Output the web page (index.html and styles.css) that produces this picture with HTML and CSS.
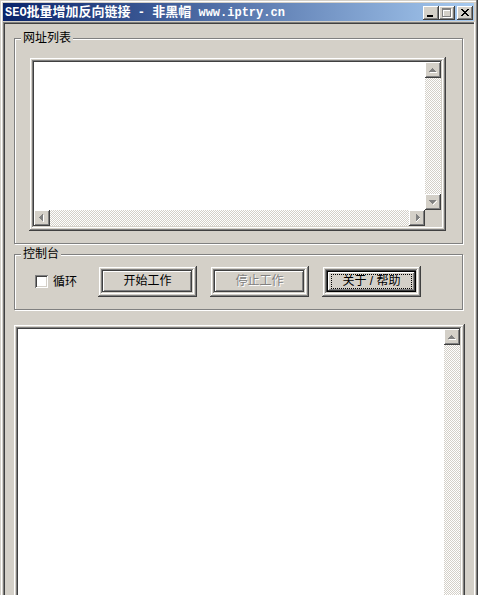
FILE: index.html
```html
<!DOCTYPE html>
<html lang="zh-CN">
<head>
<meta charset="utf-8">
<title>SEO批量增加反向链接 - 非黑帽 www.iptry.cn</title>
<link rel="stylesheet" href="styles.css">
</head>
<body>
<div class="window">
  <header class="titlebar">
    <h1 class="title">SEO<span class="han">批量增加反向链接</span> - <span class="han">非黑帽</span> www.iptry.cn</h1>
    <div class="captions">
      <button class="caption" type="button" aria-label="最小化">
        <svg width="12" height="10" shape-rendering="crispEdges"><path d="M2 7h6v2H2z" fill="#000"/></svg>
      </button>
      <button class="caption" type="button" aria-label="最大化" disabled>
        <svg width="12" height="10" shape-rendering="crispEdges"><path d="M2 1h9v9H2zM3 3v6h7V3z" fill="#fff" fill-rule="evenodd"/><path d="M1 0h9v9H1zM2 2v6h7V2z" fill="#808080" fill-rule="evenodd"/></svg>
      </button>
      <button class="caption caption-close" type="button" aria-label="关闭">
        <svg width="12" height="10" shape-rendering="crispEdges"><path d="M2 1h2v1h1v1h2V2h1V1h2v1H9v1H8v1H7v1h1v1h1v1h1v1H8V7H7V6H5v1H4v1H2V7h1V6h1V5h1V4H4V3H3V2H2z" fill="#000"/></svg>
      </button>
    </div>
  </header>
  <main class="client">
    <fieldset class="group">
      <legend>网址列表</legend>
      <div class="edge url-box">
        <textarea class="field" aria-label="网址列表"></textarea>
        <div class="track track-v">
          <button class="arrow" type="button" aria-label="向上滚动"><svg width="12" height="12" shape-rendering="crispEdges"><path d="M3 8h7v1H3z" fill="#fff"/><path d="M5 4h1v1h1v1h1v1h1v1H2V7h1V6h1V5h1z" fill="#808080"/></svg></button>
          <button class="arrow" type="button" aria-label="向下滚动"><svg width="12" height="12" shape-rendering="crispEdges"><path d="M9 5h1v1H9v1H8v1H7v1H6V8h1V7h1V6h1z" fill="#fff"/><path d="M2 4h7v1H8v1H7v1H6v1H5V7H4V6H3V5H2z" fill="#808080"/></svg></button>
        </div>
        <div class="track track-h">
          <button class="arrow" type="button" aria-label="向左滚动"><svg width="12" height="12" shape-rendering="crispEdges"><path d="M7 3h1v7H7z" fill="#fff"/><path d="M6 2h1v7H6V8H5V7H4V6H3V5h1V4h1V3h1z" fill="#808080"/></svg></button>
          <button class="arrow" type="button" aria-label="向右滚动"><svg width="12" height="12" shape-rendering="crispEdges"><path d="M8 6h1v1H8v1H7v1H6v1H5V9h1V8h1V7h1z" fill="#fff"/><path d="M5 2v7h1V8h1V7h1V6h1V5H8V4H7V3H6V2z" fill="#808080"/></svg></button>
        </div>
      </div>
    </fieldset>
    <fieldset class="group">
      <legend>控制台</legend>
      <div class="controls">
        <label class="check"><input type="checkbox">循环</label>
        <div class="buttons">
          <button class="edge command" type="button"><span class="face">开始工作</span></button>
          <button class="edge command" type="button" disabled><span class="face">停止工作</span></button>
          <button class="edge command command-default" type="button"><span class="face"><span class="focus">关于 / 帮助</span></span></button>
        </div>
      </div>
    </fieldset>
    <div class="edge log-box">
      <textarea class="field" aria-label="日志"></textarea>
      <div class="track track-v">
        <button class="arrow" type="button" aria-label="向上滚动"><svg width="12" height="12" shape-rendering="crispEdges"><path d="M3 8h7v1H3z" fill="#fff"/><path d="M5 4h1v1h1v1h1v1h1v1H2V7h1V6h1V5h1z" fill="#808080"/></svg></button>
      </div>
    </div>
  </main>
</div>
</body>
</html>
```

FILE: styles.css
```css
:root {
  --face: #d4d0c8;
  --light: #ffffff;
  --shadow: #808080;
  --dark: #404040;
  --raised:
    inset -1px -1px 0 var(--dark),
    inset 1px 1px 0 var(--light),
    inset -2px -2px 0 var(--shadow);
}

* {
  box-sizing: border-box;
}

body {
  margin: 0;
  height: 100vh;
  overflow: hidden;
  background: var(--face);
  color: #000;
  font: 12px/14px "Liberation Sans", "Noto Sans CJK SC", sans-serif;
}

button,
textarea {
  margin: 0;
  padding: 0;
  border: 0;
  border-radius: 0;
  font: inherit;
  color: inherit;
}

svg {
  display: block;
}

/* Window frame; the bottom edge runs past the viewport */
.window {
  display: flex;
  flex-direction: column;
  height: 100vh;
  padding: 3px 3px 0;
  box-shadow:
    inset -1px 0 0 var(--dark),
    inset -2px 0 0 var(--shadow),
    inset 1px 1px 0 var(--face),
    inset 2px 2px 0 var(--light);
}

.titlebar {
  display: flex;
  align-items: center;
  justify-content: space-between;
  height: 18px;
  margin: 0 1px 1px 0;
  padding: 1px 1px 0 2px;
  background: linear-gradient(to right, #0a246a, #a6caf0);
}

.title {
  margin: 0;
  color: #fff;
  font: bold 12px/16px "Liberation Mono", "Noto Sans CJK SC", monospace;
  white-space: nowrap;
}

.title .han {
  font-size: 13px;
}

.captions {
  display: flex;
}

.caption {
  width: 16px;
  height: 14px;
  padding: 2px;
  background: var(--face);
  box-shadow: var(--raised);
}

.caption-close {
  margin-left: 2px;
}

.client {
  flex: 1;
  display: flex;
  flex-direction: column;
  min-height: 0;
  padding: 10px 12px 0 11px;
  box-shadow:
    inset -1px 0 0 var(--light),
    inset 1px 1px 0 var(--shadow),
    inset 2px 2px 0 var(--dark);
}

/* Etched group boxes */
.group {
  min-width: 0;
  margin: 0 0 4px;
  padding: 0 6px 12px;
  border: 1px solid var(--shadow);
  box-shadow: 1px 1px 0 var(--light), inset 1px 1px 0 var(--light);
}

.group legend {
  padding: 0 2px;
  background: var(--face);
  line-height: 13px;
}

/* Raised rim, one-pixel gap, sunken rim */
.edge {
  padding: 5px;
  background: var(--face);
  box-shadow:
    inset -1px -1px 0 var(--dark),
    inset 1px 1px 0 var(--face),
    inset -2px -2px 0 var(--shadow),
    inset 2px 2px 0 var(--light),
    inset 0 0 0 3px var(--face),
    inset -4px -4px 0 var(--light),
    inset 4px 4px 0 var(--shadow),
    inset -5px -5px 0 var(--face),
    inset 5px 5px 0 var(--dark);
}

.url-box,
.log-box {
  display: grid;
  grid-template-columns: 1fr 16px;
}

.url-box {
  grid-template-rows: 1fr 16px;
  height: 174px;
  margin: 12px 10px 0 8px;
}

.field {
  width: 100%;
  height: 100%;
  background: #fff;
  outline: 0;
  resize: none;
  overflow: hidden;
}

.track {
  display: flex;
  justify-content: space-between;
  background: repeating-conic-gradient(var(--face) 0 25%, #fff 0 50%) 0 0 / 2px 2px;
}

.track-v {
  flex-direction: column;
}

.arrow {
  width: 16px;
  height: 16px;
  padding: 2px;
  background: var(--face);
  box-shadow: var(--raised);
}

.controls {
  display: flex;
  align-items: center;
  gap: 21px;
  margin: 5px 0 0 14px;
}

.check {
  display: flex;
  align-items: center;
  gap: 5px;
  white-space: nowrap;
}

.check input {
  appearance: none;
  width: 13px;
  height: 13px;
  margin: 0;
  background: #fff;
  box-shadow:
    inset 1px 1px 0 var(--shadow),
    inset -1px -1px 0 var(--light),
    inset 2px 2px 0 var(--dark),
    inset -2px -2px 0 var(--face);
}

.check input:checked {
  background: #000;
}

.buttons {
  display: flex;
  gap: 13px;
}

.command {
  width: 99px;
  height: 31px;
}

.face {
  display: block;
  height: 21px;
  padding: 3px;
  line-height: 15px;
  box-shadow: var(--raised);
}

.command:disabled {
  color: var(--shadow);
  text-shadow: 1px 1px 0 var(--light);
}

.command-default .face {
  box-shadow:
    inset 0 0 0 1px #000,
    inset -2px -2px 0 var(--dark),
    inset 2px 2px 0 var(--light),
    inset -3px -3px 0 var(--shadow);
}

.focus {
  display: block;
  margin: 0 1px;
  border: 1px dotted #000;
  line-height: 13px;
}

.log-box {
  flex: 1;
  min-height: 80px;
  margin: 10px -2px -5px -1px;
}
```
